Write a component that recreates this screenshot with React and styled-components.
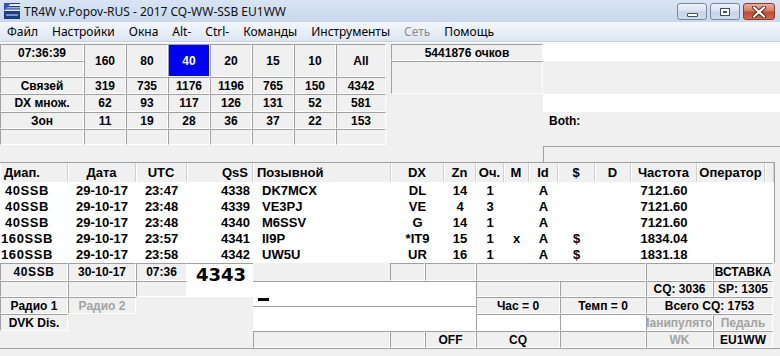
import styled, { createGlobalStyle } from "styled-components"

const GlobalStyle = createGlobalStyle`
  html, body {
    margin: 0;
    padding: 0;
    background: #f0f0f0;
  }
  body {
    font-family: "Liberation Sans", Arial, sans-serif;
  }
  * {
    box-sizing: border-box;
  }
`

const menu = [
  { label: "Файл" },
  { label: "Настройки" },
  { label: "Окна" },
  { label: "Alt-" },
  { label: "Ctrl-" },
  { label: "Команды" },
  { label: "Инструменты" },
  { label: "Сеть", off: true },
  { label: "Помощь" },
]

const bands = ["160", "80", "40", "20", "15", "10", "All"]
const activeBand = "40"

const statRows = [
  { name: "Связей", vals: [319, 735, 1176, 1196, 765, 150, 4342] },
  { name: "DX множ.", vals: [62, 93, 117, 126, 131, 52, 581] },
  { name: "Зон", vals: [11, 19, 28, 36, 37, 22, 153] },
]

const LOG_COLS = "68px 68px 51px 66px 138px 53px 32px 28px 25px 29px 37px 36px 66px 68px 8px"

const logCols = [
  { title: "Диап.", align: "center", pad: "0 14px 0 0", head: "left", spaced: true },
  { title: "Дата", align: "center" },
  { title: "UTC", align: "center" },
  { title: "QsS", align: "right", pad: "0 3px 0 0", head: "right" },
  { title: "Позывной", align: "left", pad: "0 0 0 9px", head: "left" },
  { title: "DX", align: "center" },
  { title: "Zn", align: "center" },
  { title: "Оч.", align: "center" },
  { title: "M", align: "center" },
  { title: "Id", align: "center" },
  { title: "$", align: "center" },
  { title: "D", align: "center" },
  { title: "Частота", align: "center" },
  { title: "Оператор", align: "center" },
  { title: "", align: "center" },
]

const qsos = [
  ["40SSB", "29-10-17", "23:47", "4338", "DK7MCX", "DL", "14", "1", "", "A", "", "", "7121.60", ""],
  ["40SSB", "29-10-17", "23:48", "4339", "VE3PJ", "VE", "4", "3", "", "A", "", "", "7121.60", ""],
  ["40SSB", "29-10-17", "23:48", "4340", "M6SSV", "G", "14", "1", "", "A", "", "", "7121.60", ""],
  ["160SSB", "29-10-17", "23:57", "4341", "II9P", "*IT9", "15", "1", "x", "A", "$", "", "1834.04", ""],
  ["160SSB", "29-10-17", "23:58", "4342", "UW5U", "UR", "16", "1", "", "A", "$", "", "1831.18", ""],
]

export default function App() {
  return (
    <>
      <GlobalStyle />
      <Window>
        <TitleBar>
          <AppIcon />
          <Title>TR4W v.Popov-RUS - 2017 CQ-WW-SSB EU1WW</Title>
          <WinButtons>
            <WinBtn $w={30}>
              <MinGlyph />
            </WinBtn>
            <WinBtn $w={30}>
              <MaxGlyph />
            </WinBtn>
            <WinBtn $w={32} $close>
              <svg width="14" height="12" viewBox="0 0 14 12">
                <path d="M2 1.5 L12 10.5 M12 1.5 L2 10.5" stroke="#5a2418" strokeWidth="4" strokeLinecap="round" />
                <path d="M2 1.5 L12 10.5 M12 1.5 L2 10.5" stroke="#ffffff" strokeWidth="2.2" strokeLinecap="round" />
              </svg>
            </WinBtn>
          </WinButtons>
        </TitleBar>

        <MenuBar>
          {menu.map((m) => (
            <MenuItem key={m.label} $off={m.off}>{m.label}</MenuItem>
          ))}
        </MenuBar>

        <Top>
          <Stats>
            <StatCell $col="1" $row="1">07:36:39</StatCell>
            <StatCell $col="1" $row="2" />
            {bands.map((b, i) => (
              <StatCell key={b} $col={`${i + 2}`} $row="1 / span 2" $active={b === activeBand}>
                {b}
              </StatCell>
            ))}
            {statRows.map((r, ri) => [
              <StatCell key={r.name} $col="1" $row={`${ri + 3}`}>{r.name}</StatCell>,
              ...r.vals.map((v, i) => (
                <StatCell key={r.name + i} $col={`${i + 2}`} $row={`${ri + 3}`}>{v}</StatCell>
              )),
            ])}
            {Array.from({ length: 8 }).map((_, i) => (
              <StatCell key={"e" + i} $col={`${i + 1}`} $row="6" />
            ))}
          </Stats>

          <ScoreCol>
            <ScoreBox $h={17}>5441876 очков</ScoreBox>
            <ScoreBox $h={33} />
          </ScoreCol>

          <InfoCol>
            <Strip $h={17} $white />
            <Strip $h={33} />
            <Strip $h={18} $white />
            <Both>Both:</Both>
            <InfoBox />
          </InfoCol>
        </Top>

        <Log>
          <LogHead>
            {logCols.map((c, i) => (
              <HeadCell key={i} $align={c.head || c.align}>{c.title}</HeadCell>
            ))}
          </LogHead>
          <LogBody>
            {qsos.map((q, ri) => (
              <LogRow key={ri}>
                {q.map((v, i) => (
                  <DataCell key={i} $align={logCols[i].align} $pad={logCols[i].pad} $spaced={logCols[i].spaced}>
                    {v}
                  </DataCell>
                ))}
                <DataCell />
              </LogRow>
            ))}
          </LogBody>
        </Log>

        <Bottom>
          <Slot $col="1" $row="1" $framed $spaced>40SSB</Slot>
          <Slot $col="2" $row="1" $framed>30-10-17</Slot>
          <Slot $col="3" $row="1" $framed>07:36</Slot>
          <QsoNumber>4343</QsoNumber>
          <Slot $col="6" $row="1" $framed />
          <Slot $col="7" $row="1" $framed />
          <Slot $col="8 / span 2" $row="1" $framed />
          <Slot $col="10" $row="1" $framed />
          <Slot $col="11" $row="1" $framed>ВСТАВКА</Slot>

          <Slot $col="1" $row="2" $framed />
          <Slot $col="2" $row="2" $framed />
          <Slot $col="3" $row="2" $framed />
          <Entry>
            <EntryField>
              <Caret />
            </EntryField>
            <EntryField />
          </Entry>
          <Slot $col="8" $row="2" $framed />
          <Slot $col="9" $row="2" $framed />
          <Slot $col="10" $row="2" $framed>CQ: 3036</Slot>
          <Slot $col="11" $row="2" $framed>SP: 1305</Slot>

          <Slot $col="1" $row="3" $framed>Радио 1</Slot>
          <Slot $col="2" $row="3" $framed $muted>Радио 2</Slot>
          <Slot $col="8" $row="3" $framed>Час = 0</Slot>
          <Slot $col="9" $row="3" $framed>Темп = 0</Slot>
          <Slot $col="10 / span 2" $row="3" $framed>Всего CQ: 1753</Slot>

          <Slot $col="1" $row="4" $framed>DVK Dis.</Slot>
          <Slot $col="8" $row="4" $framed $white />
          <Slot $col="9" $row="4" $framed $white />
          <Slot $col="10" $row="4" $framed $muted>Манипулятор</Slot>
          <Slot $col="11" $row="4" $framed $muted>Педаль</Slot>

          <Slot $col="5" $row="5" $framed />
          <Slot $col="6" $row="5" $framed />
          <Slot $col="7" $row="5" $framed>OFF</Slot>
          <Slot $col="8" $row="5" $framed>CQ</Slot>
          <Slot $col="9" $row="5" $framed />
          <Slot $col="10" $row="5" $framed $muted>WK</Slot>
          <Slot $col="11" $row="5" $framed>EU1WW</Slot>
        </Bottom>
        <StatusLine />
      </Window>
    </>
  )
}

function AppIcon() {
  return (
    <svg width="16" height="16" viewBox="0 0 16 16" style={{ flexShrink: 0 }}>
      <rect x="0" y="0" width="16" height="16" fill="#1d3c8c" />
      <path d="M0 1 H16 V3 H0 Z" fill="#e8eef8" />
      <path d="M0 4 H16 V5.5 H0 Z" fill="#9fb4dc" />
      <path d="M0 6.5 H16 V8 H0 Z" fill="#e8eef8" />
      <path d="M0 0 L7 0 L0 8 Z" fill="#2c55b8" />
      <rect x="2" y="11" width="12" height="2" fill="#7f95c8" />
    </svg>
  )
}

const Window = styled.div`
  width: 780px;
  height: 356px;
  overflow: hidden;
  background: #f0f0f0;
  display: flex;
  flex-direction: column;
`
const TitleBar = styled.div`
  height: 22px;
  flex-shrink: 0;
  display: flex;
  align-items: center;
  padding: 0 0 0 4px;
  gap: 4px;
  background: linear-gradient(#d8e4f3, #c8d8ec);
`
const Title = styled.div`
  flex: 1;
  font-family: "Noto Sans", "Open Sans", sans-serif;
  font-size: 12px;
  color: #111;
  white-space: nowrap;
`
const WinButtons = styled.div`
  display: flex;
  gap: 3px;
  align-self: flex-start;
  padding: 3px 5px 0 0;
`
const WinBtn = styled.div`
  width: ${(p) => p.$w}px;
  height: 17px;
  border-radius: 3px;
  border: 1px solid ${(p) => (p.$close ? "#8d3a2b" : "#76869f")};
  background: ${(p) =>
    p.$close
      ? "linear-gradient(#eab0a2, #d77a63 45%, #c44a30 55%, #cf6a4c)"
      : "linear-gradient(#eef3f9, #d9e3ef 45%, #c5d3e6 55%, #d3deec)"};
  display: flex;
  align-items: center;
  justify-content: center;
`
const MinGlyph = styled.div`
  width: 11px;
  height: 4px;
  margin-top: 6px;
  background: #fff;
  border: 1px solid #3e4f6b;
  border-radius: 1px;
`
const MaxGlyph = styled.div`
  width: 10px;
  height: 8px;
  border: 1px solid #3e4f6b;
  background: #fff;
  box-shadow: inset 0 0 0 2px #fff, inset 0 0 0 3px #3e4f6b;
`
const MenuBar = styled.div`
  height: 20px;
  flex-shrink: 0;
  display: flex;
  align-items: center;
  padding-left: 0;
  background: linear-gradient(#f4f7fc, #dce6f2);
  border-bottom: 1px solid #c3cfdf;
`
const MenuItem = styled.div`
  padding: 0 7px;
  font-family: "Noto Sans", "Open Sans", sans-serif;
  font-size: 12px;
  color: ${(p) => (p.$off ? "#8d8d8d" : "#000")};
  white-space: nowrap;
`
const Top = styled.div`
  height: 120px;
  flex-shrink: 0;
  display: flex;
  padding-top: 1px;
  border-top: 1px solid #fff;
`
const Stats = styled.div`
  width: 386px;
  display: grid;
  grid-template-columns: 84px repeat(6, 42px) 50px;
  grid-template-rows: 17px 16px 17px 18px 17px 16px;
  align-content: start;
`
const StatCell = styled.div`
  grid-column: ${(p) => p.$col};
  grid-row: ${(p) => p.$row};
  display: flex;
  align-items: center;
  justify-content: center;
  font-size: 12px;
  font-weight: bold;
  color: ${(p) => (p.$active ? "#fff" : "#000")};
  background: ${(p) => (p.$active ? "#0000f4" : "transparent")};
  border-top: 1px solid #a0a0a0;
  border-left: 1px solid #a0a0a0;
  border-right: 1px solid #fff;
  border-bottom: 1px solid #fff;
`
const ScoreCol = styled.div`
  width: 152px;
  margin-left: 5px;
  display: flex;
  flex-direction: column;
`
const ScoreBox = styled.div`
  height: ${(p) => p.$h}px;
  display: flex;
  align-items: center;
  justify-content: center;
  font-size: 12px;
  font-weight: bold;
  border-top: 1px solid #a0a0a0;
  border-left: 1px solid #a0a0a0;
  border-right: 1px solid #fff;
  border-bottom: 1px solid #fff;
`
const InfoCol = styled.div`
  flex: 1;
  display: flex;
  flex-direction: column;
`
const Strip = styled.div`
  height: ${(p) => p.$h}px;
  background: ${(p) => (p.$white ? "#fff" : "transparent")};
`
const Both = styled.div`
  height: 34px;
  padding: 2px 0 0 6px;
  font-size: 12px;
  font-weight: bold;
`
const InfoBox = styled.div`
  flex: 1;
  border-top: 1px solid #a0a0a0;
  border-left: 1px solid #a0a0a0;
`
const Log = styled.div`
  height: 101px;
  flex-shrink: 0;
  display: flex;
  flex-direction: column;
  border-top: 1px solid #a0a0a0;
  border-right: 1px solid #a0a0a0;
  width: 775px;
`
const LogHead = styled.div`
  height: 19px;
  display: grid;
  grid-template-columns: ${LOG_COLS};
  background: #f0f0f0;
`
const HeadCell = styled.div`
  display: flex;
  align-items: center;
  justify-content: ${(p) => (p.$align === "left" ? "flex-start" : p.$align === "right" ? "flex-end" : "center")};
  padding: 0 4px;
  font-size: 13px;
  font-weight: bold;
  border-right: 1px solid #d0d0d0;
  box-shadow: inset 1px 0 0 #fff;
  white-space: nowrap;
`
const LogBody = styled.div`
  flex: 1;
  background: #fff;
`
const LogRow = styled.div`
  height: 16px;
  display: grid;
  grid-template-columns: ${LOG_COLS};
`
const DataCell = styled.div`
  display: flex;
  align-items: center;
  justify-content: ${(p) => (p.$align === "left" ? "flex-start" : p.$align === "right" ? "flex-end" : "center")};
  padding: ${(p) => p.$pad || "0"};
  font-size: 13px;
  font-weight: bold;
  letter-spacing: ${(p) => (p.$spaced ? "0.6px" : "normal")};
  white-space: nowrap;
`
const Bottom = styled.div`
  height: 85px;
  flex-shrink: 0;
  display: grid;
  grid-template-columns: 68px 68px 51px 66px 137px 35px 51px 84px 86px 67px 60px 7px;
  grid-template-rows: 18px 16px 17px 17px 17px;
`
const Slot = styled.div`
  grid-column: ${(p) => p.$col};
  grid-row: ${(p) => p.$row};
  display: flex;
  align-items: center;
  justify-content: center;
  overflow: hidden;
  white-space: nowrap;
  font-size: 12px;
  font-weight: bold;
  letter-spacing: ${(p) => (p.$spaced ? "0.6px" : "normal")};
  color: ${(p) => (p.$muted ? "#a3a3a3" : "#000")};
  background: ${(p) => (p.$white ? "#fff" : "transparent")};
  border-top: ${(p) => (p.$framed ? "1px solid #a0a0a0" : "none")};
  border-left: ${(p) => (p.$framed ? "1px solid #a0a0a0" : "none")};
  border-right: ${(p) => (p.$framed ? "1px solid #fff" : "none")};
  border-bottom: ${(p) => (p.$framed ? "1px solid #fff" : "none")};
`
const QsoNumber = styled.div`
  grid-column: 4;
  grid-row: 1 / span 2;
  background: #fff;
  padding: 1px 0 0 9px;
  font-family: "DejaVu Sans", sans-serif;
  font-size: 18px;
  font-weight: bold;
  line-height: 20px;
  border-top: 1px solid #a0a0a0;
`
const Entry = styled.div`
  grid-column: 5 / span 3;
  grid-row: 2 / span 3;
  display: flex;
  flex-direction: column;
  border-top: 1px solid #a0a0a0;
`
const EntryField = styled.div`
  flex: 1;
  background: #fff;
  padding: 16px 0 0 5px;
  & + & {
    border-top: 1px solid #a0a0a0;
  }
`
const Caret = styled.div`
  width: 11px;
  height: 3px;
  background: #000;
`
const StatusLine = styled.div`
  flex: 1;
  border-top: 1px solid #a0a0a0;
`
